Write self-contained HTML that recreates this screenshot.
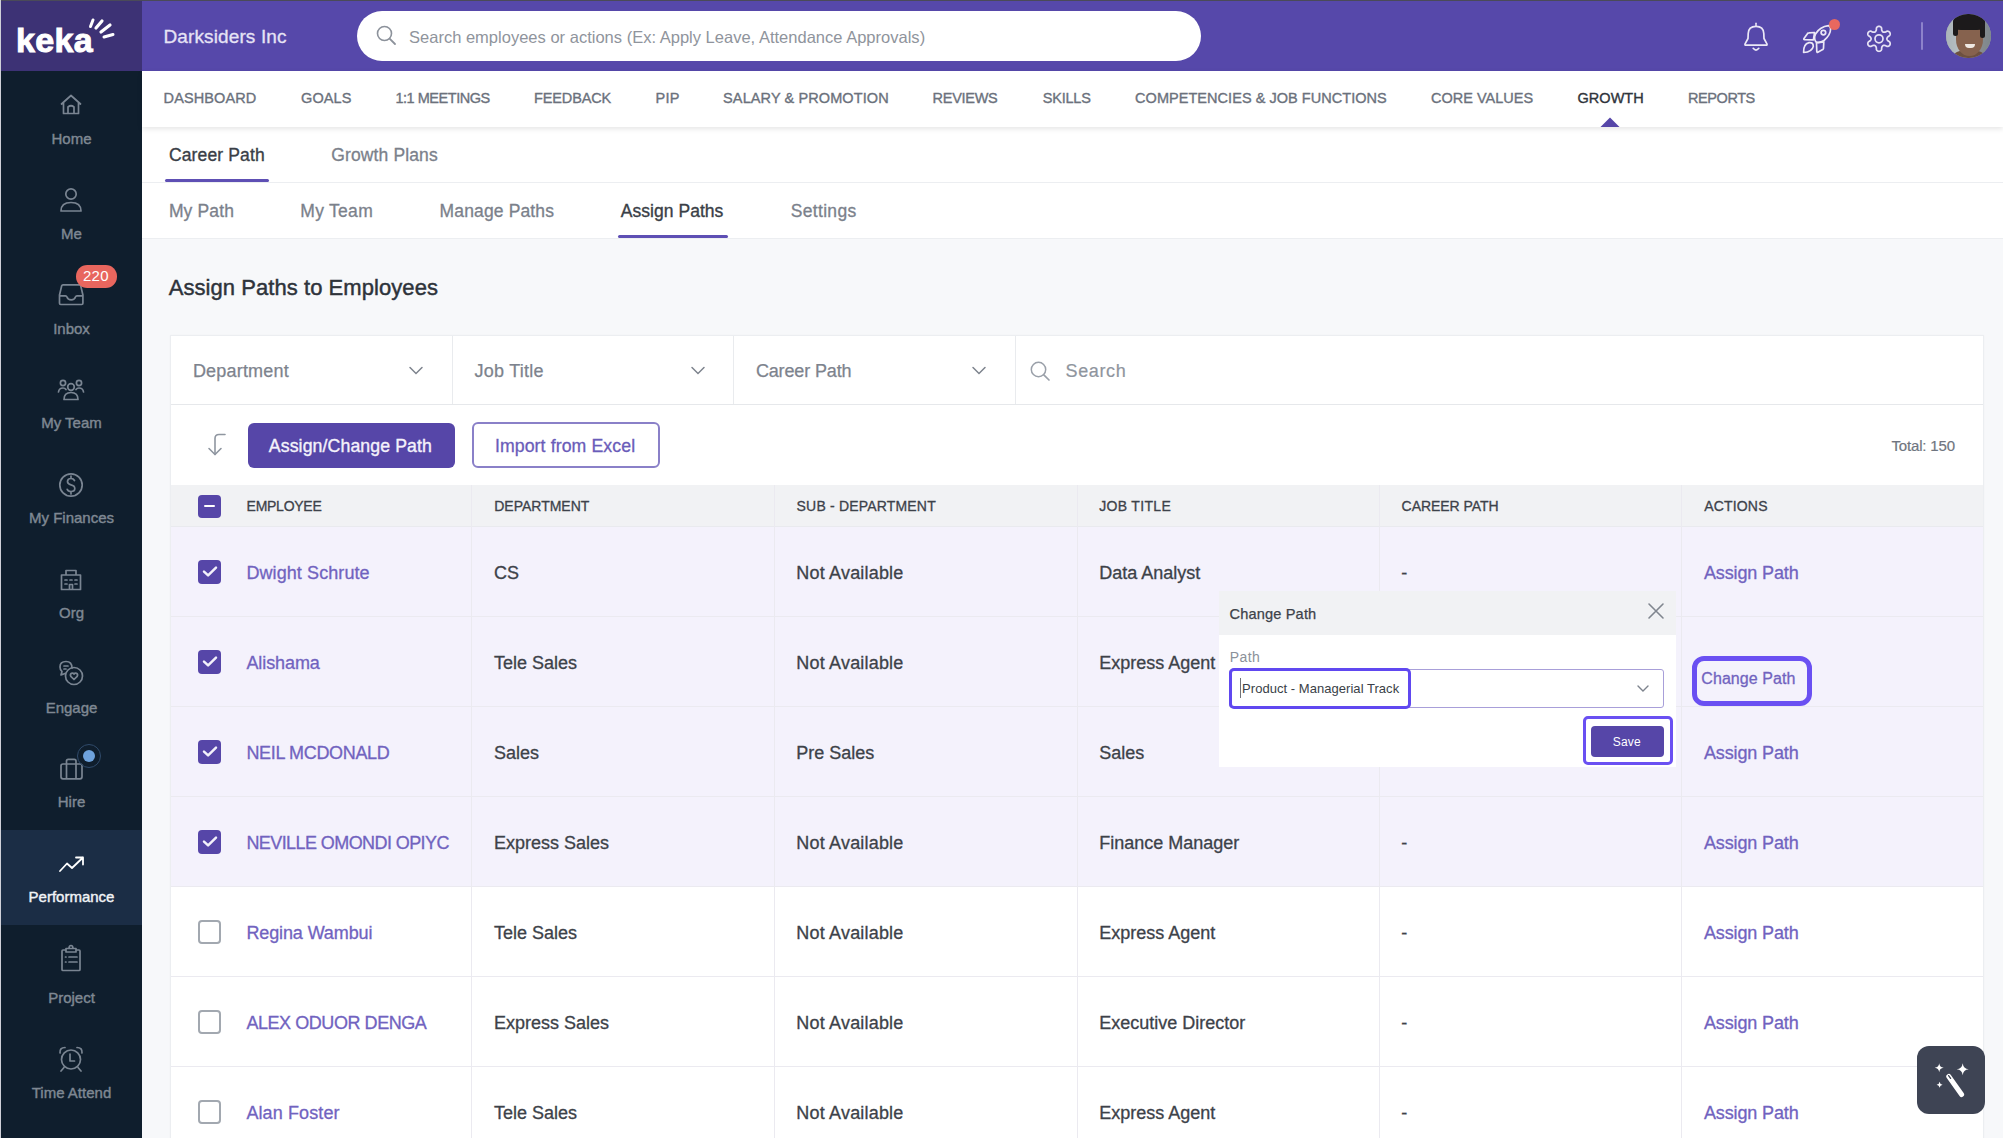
<!DOCTYPE html>
<html><head><meta charset="utf-8">
<style>
*{box-sizing:border-box;margin:0;padding:0}
html,body{width:2003px;height:1138px;overflow:hidden}
body{position:relative;background:#f7f8fa;font-family:"Liberation Sans",sans-serif;color:#3a3f47}
.a{position:absolute}
.t{position:absolute;line-height:40px;height:40px;white-space:pre;z-index:3}
svg{position:absolute;overflow:visible}
.sb{position:absolute;left:1px;width:141px;text-align:center;line-height:40px;height:40px;white-space:pre;z-index:3}
.row{position:absolute;left:171px;width:1812px;height:90px;border-bottom:1px solid #ebeaf0}
.sel{background:#f4f2fc}
.vl{position:absolute;width:1px;background:#ebeaf0;z-index:1}
.cb{position:absolute;left:197.5px;width:23.5px;height:23.5px;border-radius:4px;z-index:2}
.cbon{background:#5646a8}
.cboff{border:2px solid #a2a8b0;background:#fff}
.ic{stroke:#7a8592;stroke-width:1.7;fill:none;stroke-linecap:round;stroke-linejoin:round}
.hi{stroke:#fff;stroke-width:2;fill:none;stroke-linecap:round;stroke-linejoin:round}
</style></head><body>
<!-- base blocks -->
<div class="a" style="left:0;top:0;width:142px;height:71px;background:#3d3275"></div>
<div class="a" style="left:142px;top:0;width:1861px;height:71px;background:#5648aa"></div>
<div class="a" style="left:0;top:71px;width:142px;height:1067px;background:#0f1e2d"></div>
<div class="a" style="left:1px;top:830px;width:141px;height:95px;background:#1b2d45"></div>
<div class="a" style="left:0;top:0;width:2003px;height:1px;background:#4a4a58;z-index:50"></div>
<div class="a" style="left:0;top:0;width:1px;height:1138px;background:#cfd0d8;z-index:50"></div>

<!-- logo -->
<div class="t" style="left:16px;top:20px;font-size:34px;font-weight:700;color:#fff;-webkit-text-stroke:1px #fff;letter-spacing:0.3px">keka</div>
<svg style="left:0;top:0" width="142" height="71">
 <g stroke="#fff" stroke-linecap="round" fill="none">
  <line x1="90.5" y1="26.5" x2="93" y2="20" stroke-width="3"/>
  <line x1="96" y1="28" x2="102" y2="21" stroke-width="3.2"/>
  <line x1="101" y1="32" x2="110" y2="25" stroke-width="3.2"/>
  <line x1="104" y1="37" x2="113" y2="34.5" stroke-width="3"/>
 </g>
</svg>

<!-- header -->
<div class="a" style="left:357px;top:11px;width:844px;height:50px;border-radius:25px;background:#fff"></div>
<svg style="left:376px;top:25px" width="22" height="22" viewBox="0 0 22 22"><circle cx="8.5" cy="8.5" r="7" stroke="#8c929b" stroke-width="1.6" fill="none"/><line x1="13.6" y1="13.6" x2="19" y2="19" stroke="#8c929b" stroke-width="1.8" stroke-linecap="round"/></svg>
<!-- bell -->
<svg style="left:1740px;top:20px" width="32" height="34" viewBox="0 0 32 34">
 <path d="M6 25.2 L26 25.2 Q27.6 25.2 26.8 23.6 L24 18.5 L23.8 13.5 Q23.5 6.3 16 6.3 Q8.5 6.3 8.2 13.5 L8 18.5 L5.2 23.6 Q4.4 25.2 6 25.2 Z" stroke="#ebe8f6" stroke-width="1.7" fill="none" stroke-linejoin="round"/>
 <path d="M16 3.2 L16 6" stroke="#ebe8f6" stroke-width="1.5" stroke-linecap="round"/>
 <path d="M13.2 28.3 Q16 31.8 18.8 28.3" stroke="#ebe8f6" stroke-width="1.7" fill="none" stroke-linecap="round"/>
</svg>
<!-- rocket -->
<svg style="left:1800px;top:20px" width="40" height="36" viewBox="0 0 40 36">
 <g stroke="#ebe8f6" stroke-width="1.7" fill="none" stroke-linejoin="round" stroke-linecap="round">
 <path d="M28.5 5.6 Q20 6.5 15.5 14 Q13.5 18 15.8 21.8 Q19.5 23.5 24 20.5 Q30.5 15 30.6 9 Q30.6 6.3 28.5 5.6 Z"/>
 <circle cx="23.4" cy="12.6" r="2.3"/>
 <path d="M4.6 19.6 Q3.4 19.6 4 18.4 L7.6 13.4 Q8.1 12.8 9 12.8 L14.6 12.5 L13.4 19.8 Z"/>
 <path d="M16.5 22.8 L23.8 21.8 L23.5 28.5 Q23.4 29.3 22.7 29.6 L17.8 32.2 Q16.8 32.7 16.8 31.6 Z"/>
 <path d="M3.6 32.5 Q3.2 24.2 9 22.6 Q13.3 22 13.3 26.4 Q12.2 32 3.6 32.5 Z"/>
 </g>
</svg>
<div class="a" style="left:1828.8px;top:19.3px;width:11.2px;height:11.2px;border-radius:50%;background:#e8685f"></div>
<!-- gear -->
<svg style="left:1865px;top:24px" width="28" height="30" viewBox="0 0 28 30">
 <path d="M21.90 14.80 L21.92 14.52 L21.99 14.24 L22.11 13.95 L22.27 13.64 L22.50 13.30 L22.80 12.93 L23.25 12.49 L24.44 11.81 L24.85 11.28 L25.06 10.77 L25.17 10.29 L25.19 9.82 L25.13 9.37 L25.01 8.94 L24.83 8.55 L24.58 8.19 L24.27 7.87 L23.91 7.60 L23.49 7.38 L23.02 7.23 L22.48 7.17 L21.82 7.25 L20.62 7.94 L20.02 8.12 L19.55 8.19 L19.14 8.22 L18.79 8.20 L18.48 8.16 L18.20 8.08 L17.95 7.96 L17.72 7.80 L17.51 7.60 L17.32 7.35 L17.13 7.05 L16.95 6.69 L16.78 6.25 L16.63 5.63 L16.63 4.26 L16.37 3.64 L16.04 3.21 L15.68 2.87 L15.28 2.62 L14.86 2.44 L14.44 2.34 L14.00 2.30 L13.56 2.34 L13.14 2.44 L12.72 2.62 L12.32 2.87 L11.96 3.21 L11.63 3.64 L11.37 4.26 L11.37 5.63 L11.22 6.25 L11.05 6.69 L10.87 7.05 L10.68 7.35 L10.49 7.60 L10.28 7.80 L10.05 7.96 L9.80 8.08 L9.52 8.16 L9.21 8.20 L8.86 8.22 L8.45 8.19 L7.98 8.12 L7.38 7.94 L6.18 7.25 L5.52 7.17 L4.98 7.23 L4.51 7.38 L4.09 7.60 L3.73 7.87 L3.42 8.19 L3.17 8.55 L2.99 8.94 L2.87 9.37 L2.81 9.82 L2.83 10.29 L2.94 10.77 L3.15 11.28 L3.56 11.81 L4.75 12.49 L5.20 12.93 L5.50 13.30 L5.73 13.64 L5.89 13.95 L6.01 14.24 L6.08 14.52 L6.10 14.80 L6.08 15.08 L6.01 15.36 L5.89 15.65 L5.73 15.96 L5.50 16.30 L5.20 16.67 L4.75 17.11 L3.56 17.79 L3.15 18.32 L2.94 18.83 L2.83 19.31 L2.81 19.78 L2.87 20.23 L2.99 20.66 L3.17 21.05 L3.42 21.41 L3.73 21.73 L4.09 22.00 L4.51 22.22 L4.98 22.37 L5.52 22.43 L6.18 22.35 L7.38 21.66 L7.98 21.48 L8.45 21.41 L8.86 21.38 L9.21 21.40 L9.52 21.44 L9.80 21.52 L10.05 21.64 L10.28 21.80 L10.49 22.00 L10.68 22.25 L10.87 22.55 L11.05 22.91 L11.22 23.35 L11.37 23.97 L11.37 25.34 L11.63 25.96 L11.96 26.39 L12.32 26.73 L12.72 26.98 L13.14 27.16 L13.56 27.26 L14.00 27.30 L14.44 27.26 L14.86 27.16 L15.28 26.98 L15.68 26.73 L16.04 26.39 L16.37 25.96 L16.63 25.34 L16.63 23.97 L16.78 23.35 L16.95 22.91 L17.13 22.55 L17.32 22.25 L17.51 22.00 L17.72 21.80 L17.95 21.64 L18.20 21.52 L18.48 21.44 L18.79 21.40 L19.14 21.38 L19.55 21.41 L20.02 21.48 L20.62 21.66 L21.82 22.35 L22.48 22.43 L23.02 22.37 L23.49 22.22 L23.91 22.00 L24.27 21.73 L24.58 21.41 L24.83 21.05 L25.01 20.66 L25.13 20.23 L25.19 19.78 L25.17 19.31 L25.06 18.83 L24.85 18.32 L24.44 17.79 L23.25 17.11 L22.80 16.67 L22.50 16.30 L22.27 15.96 L22.11 15.65 L21.99 15.36 L21.92 15.08 Z" stroke="#e6e2f4" stroke-width="1.7" fill="none" stroke-linejoin="round"/>
 <circle cx="14" cy="14.8" r="4" stroke="#e6e2f4" stroke-width="1.7" fill="none"/>
</svg>
<div class="a" style="left:1921.3px;top:22px;width:2px;height:28px;border-radius:1px;background:#8d83cb"></div>
<!-- avatar -->
<div class="a" style="left:1946px;top:13.5px;width:44.5px;height:44.5px;border-radius:50%;overflow:hidden;background:#9aa1a8"><div class="a" style="left:0;top:0;width:45px;height:45px;filter:blur(0.7px)">
 <div class="a" style="left:0;top:0;width:45px;height:45px;background:linear-gradient(90deg,#aab4b9 0%,#b9c1c4 35%,#8c8f92 65%,#7d878c 100%)"></div>
 <div class="a" style="left:8px;top:36px;width:30px;height:14px;border-radius:40% 40% 0 0;background:#6d5040"></div>
 <div class="a" style="left:9.5px;top:9px;width:27px;height:33px;border-radius:42% 42% 50% 50%;background:#86624e"></div>
 <div class="a" style="left:7px;top:-1px;width:32px;height:17px;border-radius:50% 50% 25% 25%;background:#1c1a1b"></div>
 <div class="a" style="left:7px;top:8px;width:5px;height:14px;border-radius:3px;background:#1c1a1b"></div>
 <div class="a" style="left:34px;top:8px;width:4.5px;height:16px;border-radius:3px;background:#1c1a1b"></div>
 <div class="a" style="left:19px;top:30.5px;width:9.5px;height:4px;border-radius:0 0 5px 5px;background:#efe8e2"></div>
</div></div>

<!-- nav + tabs -->
<div class="a" style="left:142px;top:71px;width:1861px;height:56px;background:#fff;z-index:2;box-shadow:0 2px 5px rgba(0,0,0,0.10)"></div>
<svg style="left:1600px;top:117px;z-index:3" width="20" height="10"><path d="M0.5 10 L10 0.5 L19.5 10 Z" fill="#5646a8"/></svg>
<div class="a" style="left:142px;top:127px;width:1861px;height:56px;background:#fff;border-bottom:1px solid #eceef1"></div>
<div class="a" style="left:165px;top:178.8px;width:104px;height:3.5px;border-radius:2px;background:#5e4fb4;z-index:2"></div>
<div class="a" style="left:142px;top:183px;width:1861px;height:56px;background:#fff;border-bottom:1px solid #eceef1"></div>
<div class="a" style="left:618px;top:234.5px;width:109.5px;height:3.5px;border-radius:2px;background:#5e4fb4;z-index:2"></div>

<!-- card -->
<div class="a" style="left:170px;top:335px;width:1814px;height:830px;background:#fff;border:1px solid #eceef1;box-shadow:0 0 2px rgba(0,0,0,0.03)"></div>
<div class="a" style="left:171px;top:403.5px;width:1812px;height:1px;background:#e6e8eb"></div>
<div class="a" style="left:451.5px;top:336px;width:1px;height:68px;background:#e9ebee"></div>
<div class="a" style="left:733px;top:336px;width:1px;height:68px;background:#e9ebee"></div>
<div class="a" style="left:1014.5px;top:336px;width:1px;height:68px;background:#e9ebee"></div>
<svg style="left:409px;top:366px" width="14" height="9"><path d="M1 1.5 L7 7.5 L13 1.5" stroke="#7d838d" stroke-width="1.5" fill="none" stroke-linecap="round"/></svg>
<svg style="left:691px;top:366px" width="14" height="9"><path d="M1 1.5 L7 7.5 L13 1.5" stroke="#7d838d" stroke-width="1.5" fill="none" stroke-linecap="round"/></svg>
<svg style="left:972px;top:366px" width="14" height="9"><path d="M1 1.5 L7 7.5 L13 1.5" stroke="#7d838d" stroke-width="1.5" fill="none" stroke-linecap="round"/></svg>
<svg style="left:1029.5px;top:360.5px" width="22" height="22" viewBox="0 0 22 22"><circle cx="8.5" cy="8.5" r="7.2" stroke="#9aa0a9" stroke-width="1.5" fill="none"/><line x1="13.8" y1="13.8" x2="19" y2="19" stroke="#9aa0a9" stroke-width="1.7" stroke-linecap="round"/></svg>

<!-- toolbar -->
<svg style="left:206px;top:432px" width="22" height="26" viewBox="0 0 22 26"><path d="M19 2.5 L13 2.5 Q9 2.5 9 6.5 L9 22.5" stroke="#8f96a0" stroke-width="1.6" fill="none" stroke-linecap="round"/><path d="M3 16.5 L9 22.5 L15 16.5" stroke="#8f96a0" stroke-width="1.6" fill="none" stroke-linecap="round" stroke-linejoin="round"/></svg>
<div class="a" style="left:247.5px;top:422.5px;width:207.5px;height:45px;border-radius:6px;background:#5646a8"></div>
<div class="a" style="left:471.5px;top:422px;width:188px;height:45.5px;border-radius:6px;border:2px solid #8a80c8;background:#fff"></div>

<!-- table header -->
<div class="a" style="left:171px;top:485px;width:1812px;height:42px;background:#f1f2f4;border-bottom:1px solid #e9eaee"></div>
<div class="cb cbon" style="top:494.5px"></div>
<div class="a" style="left:203.5px;top:504.8px;width:11.5px;height:2.6px;border-radius:1px;background:#fff;z-index:3"></div>

<!-- rows -->
<div class="row sel" style="top:527px"></div>
<div class="row sel" style="top:617px"></div>
<div class="row sel" style="top:707px"></div>
<div class="row sel" style="top:797px"></div>
<div class="row" style="top:887px"></div>
<div class="row" style="top:977px"></div>
<div class="row" style="top:1067px"></div>
<!-- column dividers -->
<div class="vl" style="left:471px;top:485px;height:653px"></div>
<div class="vl" style="left:774px;top:485px;height:653px"></div>
<div class="vl" style="left:1076.5px;top:485px;height:653px"></div>
<div class="vl" style="left:1379px;top:485px;height:653px"></div>
<div class="vl" style="left:1681px;top:485px;height:653px"></div>

<!-- checkboxes -->
<div class="cb cbon" style="top:560.0px"></div>
<div class="cb cbon" style="top:650.0px"></div>
<div class="cb cbon" style="top:740.0px"></div>
<div class="cb cbon" style="top:830.0px"></div>
<div class="cb cboff" style="top:920.0px"></div>
<div class="cb cboff" style="top:1010.0px"></div>
<div class="cb cboff" style="top:1100.0px"></div>
<svg style="left:197.5px;top:560.0px;z-index:3" width="24" height="24"><path d="M6 11.6 L10.1 15.4 L18 7.6" stroke="#f3f1fa" stroke-width="2.5" fill="none" stroke-linecap="round" stroke-linejoin="round"/></svg>
<svg style="left:197.5px;top:650.0px;z-index:3" width="24" height="24"><path d="M6 11.6 L10.1 15.4 L18 7.6" stroke="#f3f1fa" stroke-width="2.5" fill="none" stroke-linecap="round" stroke-linejoin="round"/></svg>
<svg style="left:197.5px;top:740.0px;z-index:3" width="24" height="24"><path d="M6 11.6 L10.1 15.4 L18 7.6" stroke="#f3f1fa" stroke-width="2.5" fill="none" stroke-linecap="round" stroke-linejoin="round"/></svg>
<svg style="left:197.5px;top:830.0px;z-index:3" width="24" height="24"><path d="M6 11.6 L10.1 15.4 L18 7.6" stroke="#f3f1fa" stroke-width="2.5" fill="none" stroke-linecap="round" stroke-linejoin="round"/></svg>

<!-- popup -->
<div class="a" style="left:1218.5px;top:591px;width:457px;height:176px;background:#fff;z-index:10"></div>
<div class="a" style="left:1218.5px;top:591px;width:457px;height:43.5px;background:#f1f2f4;z-index:11"></div>
<svg style="left:1648px;top:603px;z-index:12" width="16" height="16"><path d="M1 1 L15 15 M15 1 L1 15" stroke="#80868f" stroke-width="1.6" stroke-linecap="round"/></svg>
<div class="a" style="left:1229px;top:669px;width:434.5px;height:39px;border:1.5px solid #a89fd9;border-radius:3px;background:#fff;z-index:11"></div>
<div class="a" style="left:1228.5px;top:668px;width:182px;height:40.5px;border:3px solid #6048f0;border-radius:5px;z-index:13"></div>
<div class="a" style="left:1239.5px;top:678px;width:1.2px;height:20px;background:#6f737a;z-index:14"></div>
<svg style="left:1636.5px;top:685px;z-index:12" width="12" height="8"><path d="M1 1 L6 6 L11 1" stroke="#7d838d" stroke-width="1.4" fill="none" stroke-linecap="round"/></svg>
<div class="a" style="left:1582.5px;top:715.5px;width:90px;height:49px;border:3px solid #6a50f2;border-radius:5px;z-index:13"></div>
<div class="a" style="left:1591px;top:726px;width:72.5px;height:31px;border-radius:4px;background:#5646a8;z-index:12"></div>
<!-- change path highlight -->
<div class="a" style="left:1692px;top:655.5px;width:119.5px;height:50.5px;border:5.5px solid #6a50f2;border-radius:12px;z-index:13"></div>

<!-- magic button -->
<div class="a" style="left:1917px;top:1046.3px;width:68px;height:67.6px;border-radius:12px;background:#3e4454;z-index:20"></div>
<svg style="left:1917.5px;top:1046.5px;z-index:21" width="67" height="67" viewBox="0 0 67 67">
 <path d="M30.8 29.5 L43.6 47.5" stroke="#fff" stroke-width="5" stroke-linecap="round"/>
 <path d="M30.6 28.6 L32.6 31.4" stroke="#3e4454" stroke-width="1.3" stroke-linecap="round"/>
 <path d="M44.7 16.2 Q45.3 21.6 50.7 22.2 Q45.3 22.8 44.7 28.2 Q44.1 22.8 38.7 22.2 Q44.1 21.6 44.7 16.2 Z" fill="#fff"/>
 <path d="M21.2 16.3 Q21.6 20.4 25.7 20.8 Q21.6 21.2 21.2 25.3 Q20.8 21.2 16.7 20.8 Q20.8 20.4 21.2 16.3 Z" fill="#fff"/>
 <path d="M21.6 34.8 Q21.9 37.5 24.6 37.8 Q21.9 38.1 21.6 40.8 Q21.3 38.1 18.6 37.8 Q21.3 37.5 21.6 34.8 Z" fill="#fff"/>
</svg>

<!-- sidebar icons -->
<svg style="left:0;top:71px" width="142" height="1067" viewBox="0 71 142 1067">
 <!-- home -->
 <path class="ic" d="M61.5 104 L71 95.5 L80.5 104 M63.5 102.5 L63.5 113.5 L78.5 113.5 L78.5 102.5 M68 113.5 L68 107 Q71 104.5 74 107 L74 113.5"/>
 <!-- me -->
 <circle class="ic" cx="71" cy="194" r="5.2"/>
 <path class="ic" d="M61 211 Q61 202.5 71 202.5 Q81 202.5 81 211 Z"/>
 <!-- inbox -->
 <path class="ic" d="M63 284.8 L79.4 284.8 Q80.4 284.8 80.7 285.8 L82.9 295 L82.9 303.3 Q82.9 304.5 81.7 304.5 L60.7 304.5 Q59.5 304.5 59.5 303.3 L59.5 295 L61.7 285.8 Q62 284.8 63 284.8 Z M59.5 295.8 L65.5 295.8 Q66.5 295.8 67 297 Q67.8 299.8 71.2 299.8 Q74.6 299.8 75.4 297 Q75.9 295.8 76.9 295.8 L82.9 295.8"/>
 <!-- my team -->
 <circle class="ic" cx="71" cy="387" r="3.3"/>
 <circle class="ic" cx="63" cy="383" r="2.6"/>
 <circle class="ic" cx="79" cy="383" r="2.6"/>
 <path class="ic" d="M64 399.5 Q64 392.5 71 392.5 Q78 392.5 78 399.5 Z"/>
 <path class="ic" d="M58.5 392 Q59 388 63 388 Q65 388 66 389.5"/>
 <path class="ic" d="M83.5 392 Q83 388 79 388 Q77 388 76 389.5"/>
 <!-- finances -->
 <circle class="ic" cx="71" cy="485" r="11.2"/>
 <path class="ic" d="M74.5 480.5 Q73.5 478.5 71 478.5 Q67.5 478.5 67.5 481.5 Q67.5 484 71 484.8 Q74.8 485.6 74.8 488.5 Q74.8 491.5 71 491.5 Q68.2 491.5 67.2 489.3 M71 476 L71 478.5 M71 491.5 L71 494"/>
 <!-- org -->
 <path class="ic" d="M61.5 589.5 L61.5 575 L80.5 575 L80.5 589.5 Z M66 575 L66 570.5 L76 570.5 L76 575 M65 580 L67 580 M70 580 L72 580 M75 580 L77 580 M65 584 L67 584 M75 584 L77 584 M69.5 589.5 L69.5 584.5 L72.5 584.5 L72.5 589.5" stroke-width="1.5"/>
 <!-- engage -->
 <path class="ic" d="M72 668 Q72 661.5 66 661.5 Q60 661.5 60 667 Q60 670 62 671.5 L61 675 L65 673.5" stroke-width="1.5"/>
 <path class="ic" d="M64 666 L68 666 M64 669 L66 669" stroke-width="1.4"/>
 <circle class="ic" cx="74" cy="676" r="8.5" stroke-width="1.5"/>
 <path class="ic" d="M74 679.5 L70.8 676.3 Q69.8 674.5 71.5 673.3 Q73 672.5 74 674 Q75 672.5 76.5 673.3 Q78.2 674.5 77.2 676.3 Z" stroke-width="1.4"/>
 <!-- hire -->
 <path class="ic" d="M63 764 L80 764 Q82 764 82 766 L82 776.8 Q82 778.8 80 778.8 L63 778.8 Q61 778.8 61 776.8 L61 766 Q61 764 63 764 Z M66.5 764 L66.5 761 Q66.5 759.3 68.2 759.3 L74.3 759.3 Q76 759.3 76 761 L76 764 M66.5 764 L66.5 778.8 M76 764 L76 778.8" stroke-width="1.5"/>
 <!-- performance -->
 <path d="M60 871 L67 863.5 L72 868 L83 857.5 M76 857.5 L83 857.5 L83 864.5" stroke="#fff" stroke-width="1.8" fill="none" stroke-linecap="round" stroke-linejoin="round"/>
 <!-- project -->
 <path class="ic" d="M66 950 L63 950 Q62 950 62 951 L62 969.5 Q62 970.5 63 970.5 L79 970.5 Q80 970.5 80 969.5 L80 951 Q80 950 79 950 L76 950 M66 948.5 L76 948.5 L76 952 L66 952 Z M69 948.5 Q69 945.5 71 945.5 Q73 945.5 73 948.5" stroke-width="1.5"/>
 <path class="ic" d="M65.5 957 L66 957 M69 957 L77 957 M65.5 962 L66 962 M69 962 L77 962" stroke-width="1.5"/>
 <!-- time attend -->
 <circle class="ic" cx="71" cy="1059.5" r="9.5" stroke-width="1.5"/>
 <path class="ic" d="M70 1054 L70 1061 L74.5 1061" stroke-width="1.5"/>
 <path class="ic" d="M60 1053 Q59.5 1047.5 65 1047.5 M82 1053 Q82.5 1047.5 77 1047.5 M64 1067.5 L61 1071 M78 1067.5 L81 1071" stroke-width="1.5"/>
</svg>
<!-- inbox badge -->
<div class="a" style="left:75.5px;top:265px;width:41px;height:22.5px;border-radius:11.25px;background:#e8665e;z-index:4;color:#fff;font-size:15px;line-height:22.5px;text-align:center;letter-spacing:0.4px">220</div>
<!-- hire dot -->
<div class="a" style="left:76.5px;top:744px;width:24px;height:24px;border-radius:12px;border:1.5px solid #2f4a6a;z-index:4"></div>
<div class="a" style="left:82.5px;top:750px;width:12px;height:12px;border-radius:6px;background:#6ea2dc;z-index:5"></div>

<div class="t" style="left:163.4px;top:16.5px;font-size:19px;color:#e6e3f5;letter-spacing:0.13px;-webkit-text-stroke:0.3px #e6e3f5;">Darksiders Inc</div>
<div class="t" style="left:409.0px;top:16.5px;font-size:16.5px;color:#8f949c;letter-spacing:0.01px;">Search employees or actions (Ex: Apply Leave, Attendance Approvals)</div>
<div class="t" style="left:163.6px;top:78.0px;font-size:14.5px;color:#6b717c;letter-spacing:0.10px;-webkit-text-stroke:0.35px #6b717c;">DASHBOARD</div>
<div class="t" style="left:301.0px;top:78.0px;font-size:14.5px;color:#6b717c;letter-spacing:0.12px;-webkit-text-stroke:0.35px #6b717c;">GOALS</div>
<div class="t" style="left:395.4px;top:78.0px;font-size:14.5px;color:#6b717c;letter-spacing:-0.46px;-webkit-text-stroke:0.35px #6b717c;">1:1 MEETINGS</div>
<div class="t" style="left:534.1px;top:78.0px;font-size:14.5px;color:#6b717c;letter-spacing:-0.14px;-webkit-text-stroke:0.35px #6b717c;">FEEDBACK</div>
<div class="t" style="left:655.6px;top:78.0px;font-size:14.5px;color:#6b717c;letter-spacing:0.29px;-webkit-text-stroke:0.35px #6b717c;">PIP</div>
<div class="t" style="left:723.1px;top:78.0px;font-size:14.5px;color:#6b717c;letter-spacing:0.10px;-webkit-text-stroke:0.35px #6b717c;">SALARY &amp; PROMOTION</div>
<div class="t" style="left:932.6px;top:78.0px;font-size:14.5px;color:#6b717c;letter-spacing:-0.29px;-webkit-text-stroke:0.35px #6b717c;">REVIEWS</div>
<div class="t" style="left:1042.7px;top:78.0px;font-size:14.5px;color:#6b717c;letter-spacing:-0.20px;-webkit-text-stroke:0.35px #6b717c;">SKILLS</div>
<div class="t" style="left:1135.1px;top:78.0px;font-size:14.5px;color:#6b717c;letter-spacing:0.04px;-webkit-text-stroke:0.35px #6b717c;">COMPETENCIES &amp; JOB FUNCTIONS</div>
<div class="t" style="left:1431.1px;top:78.0px;font-size:14.5px;color:#6b717c;letter-spacing:-0.01px;-webkit-text-stroke:0.35px #6b717c;">CORE VALUES</div>
<div class="t" style="left:1577.5px;top:78.0px;font-size:14.5px;color:#2f343b;letter-spacing:0.04px;-webkit-text-stroke:0.35px #2f343b;">GROWTH</div>
<div class="t" style="left:1688.1px;top:78.0px;font-size:14.5px;color:#6b717c;letter-spacing:-0.45px;-webkit-text-stroke:0.35px #6b717c;">REPORTS</div>
<div class="t" style="left:168.9px;top:134.6px;font-size:17.5px;color:#3a3f47;letter-spacing:0.15px;-webkit-text-stroke:0.35px #3a3f47;">Career Path</div>
<div class="t" style="left:331.3px;top:134.6px;font-size:17.5px;color:#7b818b;letter-spacing:0.12px;-webkit-text-stroke:0.3px #7b818b;">Growth Plans</div>
<div class="t" style="left:168.9px;top:190.8px;font-size:17.5px;color:#7b818b;letter-spacing:0.13px;-webkit-text-stroke:0.3px #7b818b;">My Path</div>
<div class="t" style="left:300.3px;top:190.8px;font-size:17.5px;color:#7b818b;letter-spacing:0.29px;-webkit-text-stroke:0.3px #7b818b;">My Team</div>
<div class="t" style="left:439.6px;top:190.8px;font-size:17.5px;color:#7b818b;letter-spacing:0.14px;-webkit-text-stroke:0.3px #7b818b;">Manage Paths</div>
<div class="t" style="left:620.7px;top:190.8px;font-size:17.5px;color:#3a3f47;letter-spacing:0.05px;-webkit-text-stroke:0.35px #3a3f47;">Assign Paths</div>
<div class="t" style="left:790.8px;top:190.8px;font-size:17.5px;color:#7b818b;letter-spacing:0.31px;-webkit-text-stroke:0.3px #7b818b;">Settings</div>
<div class="t" style="left:168.7px;top:268.0px;font-size:22px;color:#2e333a;letter-spacing:0.06px;-webkit-text-stroke:0.45px #2e333a;">Assign Paths to Employees</div>
<div class="t" style="left:192.9px;top:351.0px;font-size:18px;color:#7d838d;letter-spacing:0.20px;-webkit-text-stroke:0.25px #7d838d;">Department</div>
<div class="t" style="left:474.5px;top:351.0px;font-size:18px;color:#7d838d;letter-spacing:0.26px;-webkit-text-stroke:0.25px #7d838d;">Job Title</div>
<div class="t" style="left:755.9px;top:351.0px;font-size:18px;color:#7d838d;letter-spacing:-0.14px;-webkit-text-stroke:0.25px #7d838d;">Career Path</div>
<div class="t" style="left:1065.6px;top:351.0px;font-size:18px;color:#8f959e;letter-spacing:0.62px;-webkit-text-stroke:0.2px #8f959e;">Search</div>
<div class="t" style="left:268.8px;top:425.6px;font-size:17.7px;color:#f4f2fb;letter-spacing:0.11px;z-index:5;-webkit-text-stroke:0.35px #f4f2fb;">Assign/Change Path</div>
<div class="t" style="left:494.9px;top:425.6px;font-size:17.7px;color:#6a5cb9;letter-spacing:0.10px;z-index:5;-webkit-text-stroke:0.3px #6a5cb9;">Import from Excel</div>
<div class="t" style="left:1891.4px;top:426.0px;font-size:15px;color:#6f7580;letter-spacing:-0.15px;-webkit-text-stroke:0.2px #6f7580;">Total: 150</div>
<div class="t" style="left:246.6px;top:486.3px;font-size:14px;color:#3d424a;letter-spacing:-0.27px;-webkit-text-stroke:0.3px #3d424a;">EMPLOYEE</div>
<div class="t" style="left:494.2px;top:486.3px;font-size:14px;color:#3d424a;-webkit-text-stroke:0.3px #3d424a;">DEPARTMENT</div>
<div class="t" style="left:796.6px;top:486.3px;font-size:14px;color:#3d424a;letter-spacing:0.18px;-webkit-text-stroke:0.3px #3d424a;">SUB - DEPARTMENT</div>
<div class="t" style="left:1099.2px;top:486.3px;font-size:14px;color:#3d424a;letter-spacing:0.33px;-webkit-text-stroke:0.3px #3d424a;">JOB TITLE</div>
<div class="t" style="left:1401.6px;top:486.3px;font-size:14px;color:#3d424a;letter-spacing:-0.06px;-webkit-text-stroke:0.3px #3d424a;">CAREER PATH</div>
<div class="t" style="left:1704.2px;top:486.3px;font-size:14px;color:#3d424a;letter-spacing:0.18px;-webkit-text-stroke:0.3px #3d424a;">ACTIONS</div>
<div class="t" style="left:246.4px;top:552.5px;font-size:18px;color:#7163bf;letter-spacing:0.09px;-webkit-text-stroke:0.3px #7163bf;">Dwight Schrute</div>
<div class="t" style="left:493.9px;top:552.5px;font-size:18px;color:#3d4249;-webkit-text-stroke:0.3px #3d4249;">CS</div>
<div class="t" style="left:796.3px;top:552.5px;font-size:18px;color:#3d4249;letter-spacing:0.19px;-webkit-text-stroke:0.3px #3d4249;">Not Available</div>
<div class="t" style="left:1099.2px;top:552.5px;font-size:18px;color:#3d4249;-webkit-text-stroke:0.3px #3d4249;">Data Analyst</div>
<div class="t" style="left:1401.3px;top:552.5px;font-size:18px;color:#3d4249;-webkit-text-stroke:0.3px #3d4249;">-</div>
<div class="t" style="left:1703.9px;top:552.5px;font-size:18px;color:#7163bf;letter-spacing:-0.13px;-webkit-text-stroke:0.3px #7163bf;">Assign Path</div>
<div class="t" style="left:246.4px;top:642.5px;font-size:18px;color:#7163bf;letter-spacing:-0.08px;-webkit-text-stroke:0.3px #7163bf;">Alishama</div>
<div class="t" style="left:493.9px;top:642.5px;font-size:18px;color:#3d4249;-webkit-text-stroke:0.3px #3d4249;">Tele Sales</div>
<div class="t" style="left:796.3px;top:642.5px;font-size:18px;color:#3d4249;letter-spacing:0.19px;-webkit-text-stroke:0.3px #3d4249;">Not Available</div>
<div class="t" style="left:1099.2px;top:642.5px;font-size:18px;color:#3d4249;-webkit-text-stroke:0.3px #3d4249;">Express Agent</div>
<div class="t" style="left:246.4px;top:732.5px;font-size:18px;color:#7163bf;letter-spacing:-0.33px;-webkit-text-stroke:0.3px #7163bf;">NEIL MCDONALD</div>
<div class="t" style="left:493.9px;top:732.5px;font-size:18px;color:#3d4249;-webkit-text-stroke:0.3px #3d4249;">Sales</div>
<div class="t" style="left:796.3px;top:732.5px;font-size:18px;color:#3d4249;-webkit-text-stroke:0.3px #3d4249;">Pre Sales</div>
<div class="t" style="left:1099.2px;top:732.5px;font-size:18px;color:#3d4249;-webkit-text-stroke:0.3px #3d4249;">Sales</div>
<div class="t" style="left:1703.9px;top:732.5px;font-size:18px;color:#7163bf;letter-spacing:-0.13px;-webkit-text-stroke:0.3px #7163bf;">Assign Path</div>
<div class="t" style="left:246.4px;top:822.5px;font-size:18px;color:#7163bf;letter-spacing:-0.58px;-webkit-text-stroke:0.3px #7163bf;">NEVILLE OMONDI OPIYC</div>
<div class="t" style="left:493.9px;top:822.5px;font-size:18px;color:#3d4249;-webkit-text-stroke:0.3px #3d4249;">Express Sales</div>
<div class="t" style="left:796.3px;top:822.5px;font-size:18px;color:#3d4249;letter-spacing:0.19px;-webkit-text-stroke:0.3px #3d4249;">Not Available</div>
<div class="t" style="left:1099.2px;top:822.5px;font-size:18px;color:#3d4249;-webkit-text-stroke:0.3px #3d4249;">Finance Manager</div>
<div class="t" style="left:1401.3px;top:822.5px;font-size:18px;color:#3d4249;-webkit-text-stroke:0.3px #3d4249;">-</div>
<div class="t" style="left:1703.9px;top:822.5px;font-size:18px;color:#7163bf;letter-spacing:-0.13px;-webkit-text-stroke:0.3px #7163bf;">Assign Path</div>
<div class="t" style="left:246.4px;top:912.5px;font-size:18px;color:#7163bf;letter-spacing:-0.11px;-webkit-text-stroke:0.3px #7163bf;">Regina Wambui</div>
<div class="t" style="left:493.9px;top:912.5px;font-size:18px;color:#3d4249;-webkit-text-stroke:0.3px #3d4249;">Tele Sales</div>
<div class="t" style="left:796.3px;top:912.5px;font-size:18px;color:#3d4249;letter-spacing:0.19px;-webkit-text-stroke:0.3px #3d4249;">Not Available</div>
<div class="t" style="left:1099.2px;top:912.5px;font-size:18px;color:#3d4249;-webkit-text-stroke:0.3px #3d4249;">Express Agent</div>
<div class="t" style="left:1401.3px;top:912.5px;font-size:18px;color:#3d4249;-webkit-text-stroke:0.3px #3d4249;">-</div>
<div class="t" style="left:1703.9px;top:912.5px;font-size:18px;color:#7163bf;letter-spacing:-0.13px;-webkit-text-stroke:0.3px #7163bf;">Assign Path</div>
<div class="t" style="left:246.4px;top:1002.5px;font-size:18px;color:#7163bf;letter-spacing:-0.44px;-webkit-text-stroke:0.3px #7163bf;">ALEX ODUOR DENGA</div>
<div class="t" style="left:493.9px;top:1002.5px;font-size:18px;color:#3d4249;-webkit-text-stroke:0.3px #3d4249;">Express Sales</div>
<div class="t" style="left:796.3px;top:1002.5px;font-size:18px;color:#3d4249;letter-spacing:0.19px;-webkit-text-stroke:0.3px #3d4249;">Not Available</div>
<div class="t" style="left:1099.2px;top:1002.5px;font-size:18px;color:#3d4249;-webkit-text-stroke:0.3px #3d4249;">Executive Director</div>
<div class="t" style="left:1401.3px;top:1002.5px;font-size:18px;color:#3d4249;-webkit-text-stroke:0.3px #3d4249;">-</div>
<div class="t" style="left:1703.9px;top:1002.5px;font-size:18px;color:#7163bf;letter-spacing:-0.13px;-webkit-text-stroke:0.3px #7163bf;">Assign Path</div>
<div class="t" style="left:246.4px;top:1092.5px;font-size:18px;color:#7163bf;letter-spacing:0.11px;-webkit-text-stroke:0.3px #7163bf;">Alan Foster</div>
<div class="t" style="left:493.9px;top:1092.5px;font-size:18px;color:#3d4249;-webkit-text-stroke:0.3px #3d4249;">Tele Sales</div>
<div class="t" style="left:796.3px;top:1092.5px;font-size:18px;color:#3d4249;letter-spacing:0.19px;-webkit-text-stroke:0.3px #3d4249;">Not Available</div>
<div class="t" style="left:1099.2px;top:1092.5px;font-size:18px;color:#3d4249;-webkit-text-stroke:0.3px #3d4249;">Express Agent</div>
<div class="t" style="left:1401.3px;top:1092.5px;font-size:18px;color:#3d4249;-webkit-text-stroke:0.3px #3d4249;">-</div>
<div class="t" style="left:1703.9px;top:1092.5px;font-size:18px;color:#7163bf;letter-spacing:-0.13px;-webkit-text-stroke:0.3px #7163bf;">Assign Path</div>
<div class="t" style="left:1229.6px;top:593.7px;font-size:14.6px;color:#3d424a;letter-spacing:0.14px;z-index:20;-webkit-text-stroke:0.25px #3d424a;">Change Path</div>
<div class="t" style="left:1229.7px;top:636.7px;font-size:14px;color:#8b9199;letter-spacing:0.44px;z-index:20;">Path</div>
<div class="t" style="left:1242.1px;top:668.6px;font-size:13px;color:#3a3f47;letter-spacing:0.04px;z-index:20;">Product - Managerial Track</div>
<div class="t" style="left:1612.8px;top:722.0px;font-size:12px;color:#ffffff;letter-spacing:0.20px;z-index:22;">Save</div>
<div class="t" style="left:1701.3px;top:658.5px;font-size:16px;color:#7163bf;letter-spacing:0.07px;z-index:20;-webkit-text-stroke:0.3px #7163bf;">Change Path</div>
<div class="sb" style="top:118.8px;font-size:15px;color:#7f8893;-webkit-text-stroke:0.4px #7f8893;">Home</div>
<div class="sb" style="top:213.6px;font-size:15px;color:#7f8893;-webkit-text-stroke:0.4px #7f8893;">Me</div>
<div class="sb" style="top:308.5px;font-size:15px;color:#7f8893;-webkit-text-stroke:0.4px #7f8893;">Inbox</div>
<div class="sb" style="top:403.0px;font-size:15px;color:#7f8893;-webkit-text-stroke:0.4px #7f8893;">My Team</div>
<div class="sb" style="top:498.0px;font-size:15px;color:#7f8893;-webkit-text-stroke:0.4px #7f8893;">My Finances</div>
<div class="sb" style="top:592.5px;font-size:15px;color:#7f8893;-webkit-text-stroke:0.4px #7f8893;">Org</div>
<div class="sb" style="top:688.0px;font-size:15px;color:#7f8893;-webkit-text-stroke:0.4px #7f8893;">Engage</div>
<div class="sb" style="top:782.4px;font-size:15px;color:#7f8893;-webkit-text-stroke:0.4px #7f8893;">Hire</div>
<div class="sb" style="top:978.2px;font-size:15px;color:#7f8893;-webkit-text-stroke:0.4px #7f8893;">Project</div>
<div class="sb" style="top:1073.0px;font-size:15px;color:#7f8893;-webkit-text-stroke:0.4px #7f8893;">Time Attend</div>
<div class="sb" style="top:877.3px;font-size:15px;color:#f2f4f7;-webkit-text-stroke:0.4px #f2f4f7;">Performance</div>
</body></html>
